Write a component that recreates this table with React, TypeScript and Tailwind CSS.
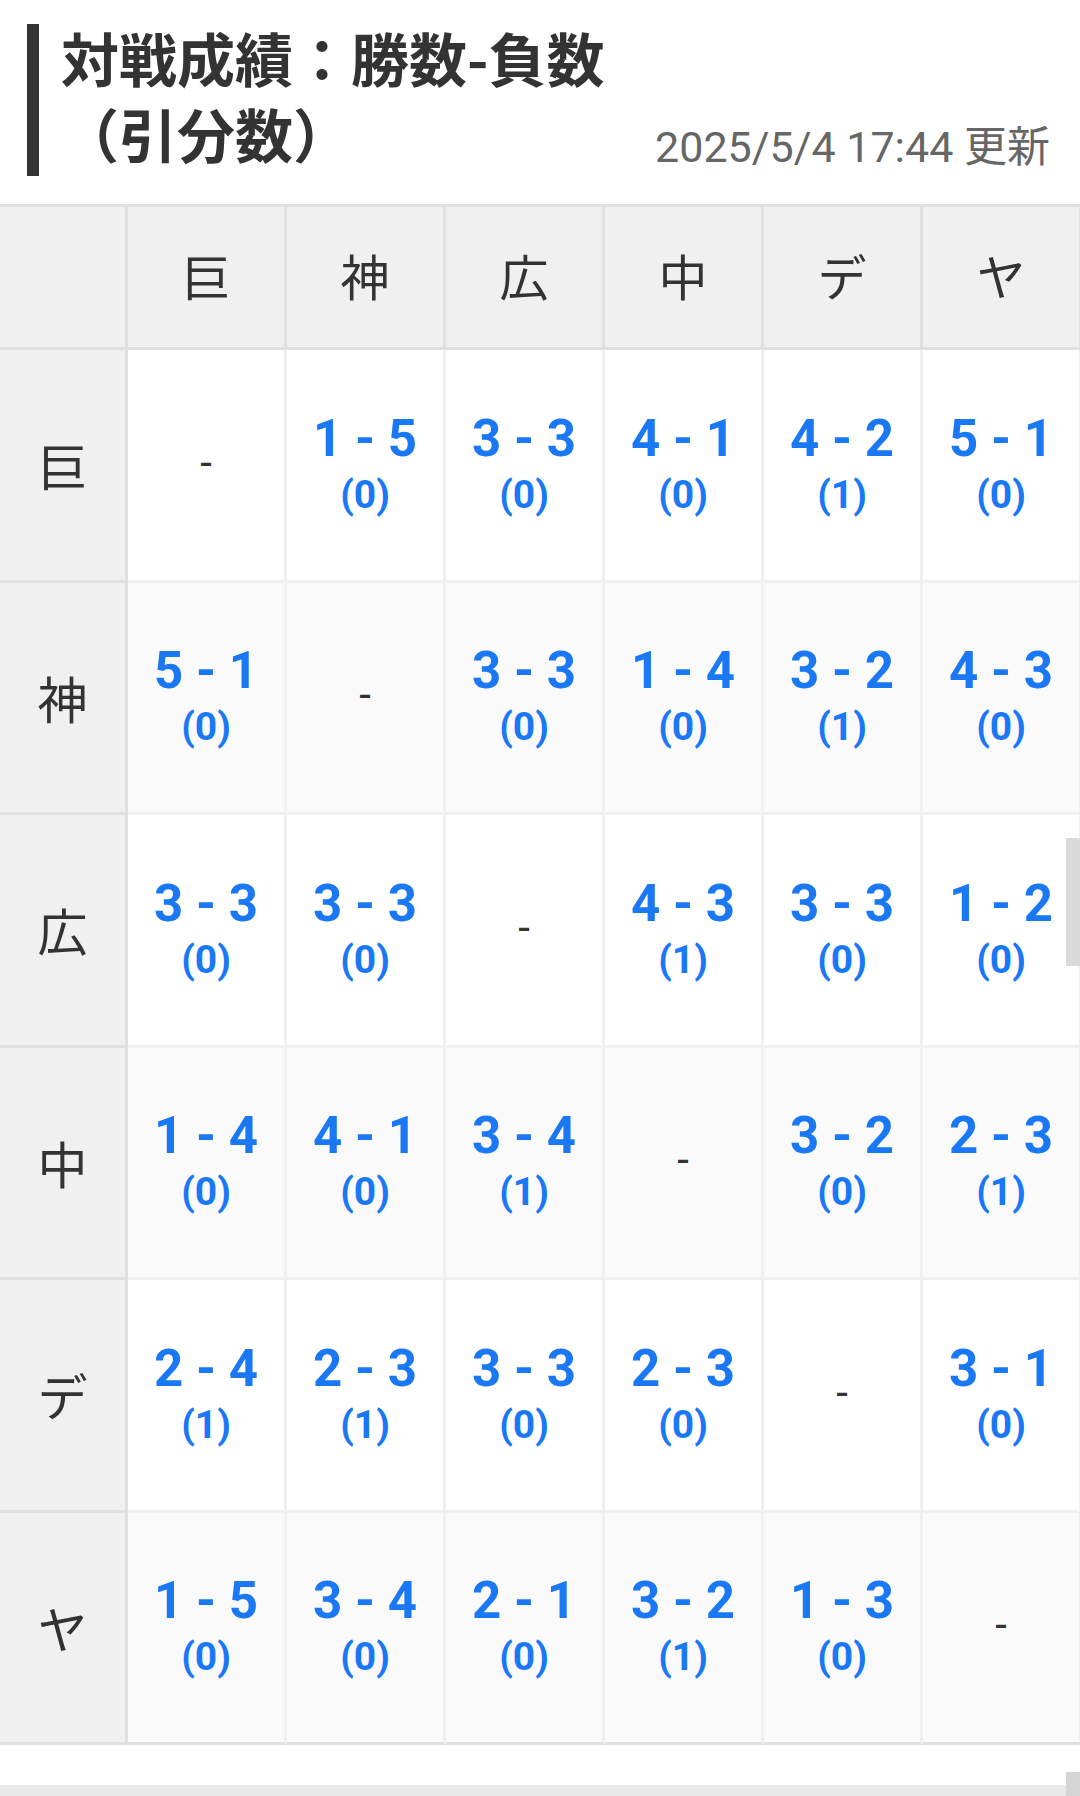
import React from "react";

const teams = ["巨", "神", "広", "中", "デ", "ヤ"];

// [win, lose, draw] or null for same team
const results: (number[] | null)[][] = [
  [null, [1, 5, 0], [3, 3, 0], [4, 1, 0], [4, 2, 1], [5, 1, 0]],
  [[5, 1, 0], null, [3, 3, 0], [1, 4, 0], [3, 2, 1], [4, 3, 0]],
  [[3, 3, 0], [3, 3, 0], null, [4, 3, 1], [3, 3, 0], [1, 2, 0]],
  [[1, 4, 0], [4, 1, 0], [3, 4, 1], null, [3, 2, 0], [2, 3, 1]],
  [[2, 4, 1], [2, 3, 1], [3, 3, 0], [2, 3, 0], null, [3, 1, 0]],
  [[1, 5, 0], [3, 4, 0], [2, 1, 0], [3, 2, 1], [1, 3, 0], null],
];

const jp = "font-['Noto_Sans_CJK_JP',sans-serif]";

const App = () => {
  return (
    <div className="relative w-[1080px] bg-white text-[#333] overflow-hidden">
      <div className="flex items-end justify-between pl-[27px] pr-[30px] pt-[24px]">
        <div className="border-l-[12px] border-[#333] pb-[5px] pl-[22px]">
          <h2 className={`${jp} -mt-[5px] text-[58px] font-bold leading-[76px] text-[#333]`}>
            対戦成績：勝数-負数
            <br />
            （引分数）
          </h2>
        </div>
        <p className="mb-[1px] font-['Roboto','Noto_Sans_CJK_JP',sans-serif] text-[43px] leading-[56px] text-[#666]">
          2025/5/4 17:44 更新
        </p>
      </div>

      <div className="mt-[28px] w-[1080px] overflow-hidden border-t-[3px] border-[#e0e0e0]">
        <div className="grid w-[1082px] grid-cols-[128px_repeat(6,159px)]">
          <div className="h-[143px] border-b-[3px] border-r-[3px] border-[#e0e0e0] bg-[#f0f0f0]" />
          {teams.map((t) => (
            <div
              key={t}
              className={`${jp} flex h-[143px] items-center justify-center border-b-[3px] border-r-[3px] border-[#e0e0e0] bg-[#f0f0f0] pb-[4px] text-[49px] text-[#333]`}
            >
              {t}
            </div>
          ))}

          {results.map((row, i) => (
            <React.Fragment key={i}>
              <div
                className={`${jp} flex h-[232.5px] items-center justify-center border-b-[3px] border-r-[3px] border-[#e0e0e0] bg-[#f0f0f0] text-[50px] text-[#333]`}
              >
                {teams[i]}
              </div>
              {row.map((r, j) => (
                <div
                  key={j}
                  className={`flex h-[232.5px] flex-col items-center justify-center border-b-[3px] border-r-[3px] pb-[4px] font-['Roboto',sans-serif] ${
                    i === 5 ? "border-b-[#e0e0e0]" : "border-b-[#f0f0f0]"
                  } border-r-[#f0f0f0] ${i % 2 === 1 ? "bg-[#fafafa]" : "bg-white"}`}
                >
                  {r ? (
                    <>
                      <span className="text-[51px] font-bold leading-[60px] text-[#1a78f5]">
                        {r[0]} - {r[1]}
                      </span>
                      <span className="mt-[4px] text-[39px] font-bold leading-[44px] text-[#1a78f5]">
                        ({r[2]})
                      </span>
                    </>
                  ) : (
                    <span className="text-[42px] leading-[48px] text-[#333]">-</span>
                  )}
                </div>
              ))}
            </React.Fragment>
          ))}
        </div>
      </div>

      <div className="mt-[40px] h-[11px] bg-[#e8e8e8]" />

      {/* overlay scrollbars */}
      <div className="absolute right-0 top-[838px] h-[128px] w-[14px] bg-[#dadada]" />
      <div className="absolute bottom-0 right-0 h-[24px] w-[14px] bg-[#d5d5d5]" />
    </div>
  );
};

export default App;
